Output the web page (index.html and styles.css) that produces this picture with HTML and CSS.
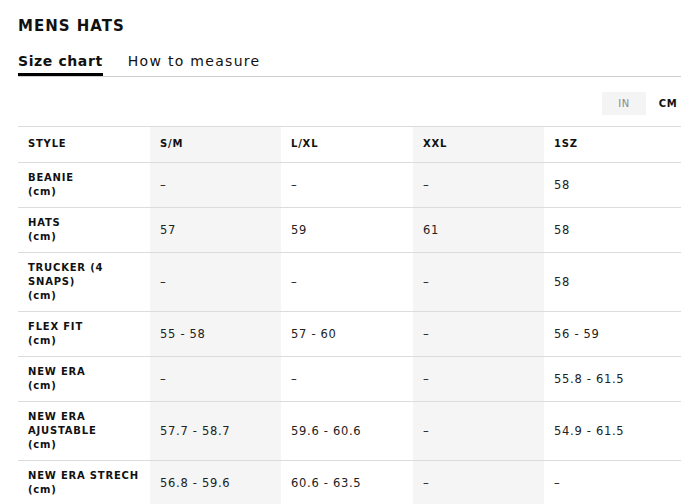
FILE: index.html
```html
<!DOCTYPE html>
<html>
<head>
<meta charset="utf-8">
<link rel="stylesheet" href="styles.css">
</head>
<body>
<div class="page">
  <h1 class="title">MENS HATS</h1>
  <div class="tabs">
    <span class="tab active">Size chart</span>
    <span class="tab">How to measure</span>
  </div>
  <div class="units">
    <span class="unit">IN</span>
    <span class="unit on">CM</span>
  </div>
  <table class="chart">
    <colgroup>
      <col class="c1"><col class="c2"><col class="c3"><col class="c4"><col class="c5">
    </colgroup>
    <thead>
      <tr><th>STYLE</th><th class="sh">S/M</th><th>L/XL</th><th class="sh">XXL</th><th>1SZ</th></tr>
    </thead>
    <tbody>
      <tr><th>BEANIE<br>(cm)</th><td class="sh">–</td><td>–</td><td class="sh">–</td><td>58</td></tr>
      <tr><th>HATS<br>(cm)</th><td class="sh">57</td><td>59</td><td class="sh">61</td><td>58</td></tr>
      <tr><th>TRUCKER (4<br>SNAPS)<br>(cm)</th><td class="sh">–</td><td>–</td><td class="sh">–</td><td>58</td></tr>
      <tr><th>FLEX FIT<br>(cm)</th><td class="sh">55 - 58</td><td>57 - 60</td><td class="sh">–</td><td>56 - 59</td></tr>
      <tr><th>NEW ERA<br>(cm)</th><td class="sh">–</td><td>–</td><td class="sh">–</td><td>55.8 - 61.5</td></tr>
      <tr><th>NEW ERA<br>AJUSTABLE<br>(cm)</th><td class="sh">57.7 - 58.7</td><td>59.6 - 60.6</td><td class="sh">–</td><td>54.9 - 61.5</td></tr>
      <tr><th>NEW ERA STRECH<br>(cm)</th><td class="sh">56.8 - 59.6</td><td>60.6 - 63.5</td><td class="sh">–</td><td>–</td></tr>
    </tbody>
  </table>
</div>
</body>
</html>
```
FILE: styles.css
```css
html, body {
  margin: 0;
  padding: 0;
  background: #fff;
  overflow: hidden;
}
body {
  font-family: "DejaVu Sans", "Open Sans", sans-serif;
  color: #111;
  width: 681px;
}
.page {
  width: 672px;
  padding: 17px 0 0 18px;
}
.title {
  margin: 0;
  font-size: 15px;
  font-weight: bold;
  letter-spacing: 1px;
  line-height: 18px;
  color: #111;
}
.tabs {
  display: flex;
  gap: 25px;
  margin-top: 17px;
  border-bottom: 1px solid #cfcfcf;
  width: 663px;
}
.tab {
  font-size: 14px;
  letter-spacing: 1.3px;
  line-height: 18px;
  padding-bottom: 3px;
  border-bottom: 3px solid transparent;
  color: #111;
}
.tab.active {
  font-weight: bold;
  letter-spacing: 0.6px;
  border-bottom-color: #000;
}
.units {
  display: flex;
  justify-content: flex-end;
  margin-top: 15px;
}
.unit {
  width: 44px;
  height: 23px;
  line-height: 23px;
  text-align: center;
  font-size: 10px;
  color: #888;
  background: #f4f4f4;
  letter-spacing: 0.5px;
}
.unit.on {
  background: #fff;
  color: #111;
  font-weight: bold;
}
.chart {
  margin-top: 11px;
  border-collapse: collapse;
  width: 700px;
  table-layout: fixed;
}
.c1 { width: 132px; }
.c2 { width: 131px; }
.c3 { width: 132px; }
.c4 { width: 131px; }
.chart tr {
  border-top: 1px solid #dcdcdc;
}
.chart th, .chart td {
  text-align: left;
  vertical-align: middle;
  padding: 8px 10px;
  line-height: 14px;
}
.chart th {
  font-size: 10px;
  font-weight: bold;
  letter-spacing: 0.8px;
  color: #111;
}
.chart thead th {
  padding: 10px 10px 11px;
  line-height: 14px;
}
.chart td {
  font-size: 11.5px;
  letter-spacing: 0.7px;
  color: #222;
}
.sh {
  background: #f5f5f5;
}
```
